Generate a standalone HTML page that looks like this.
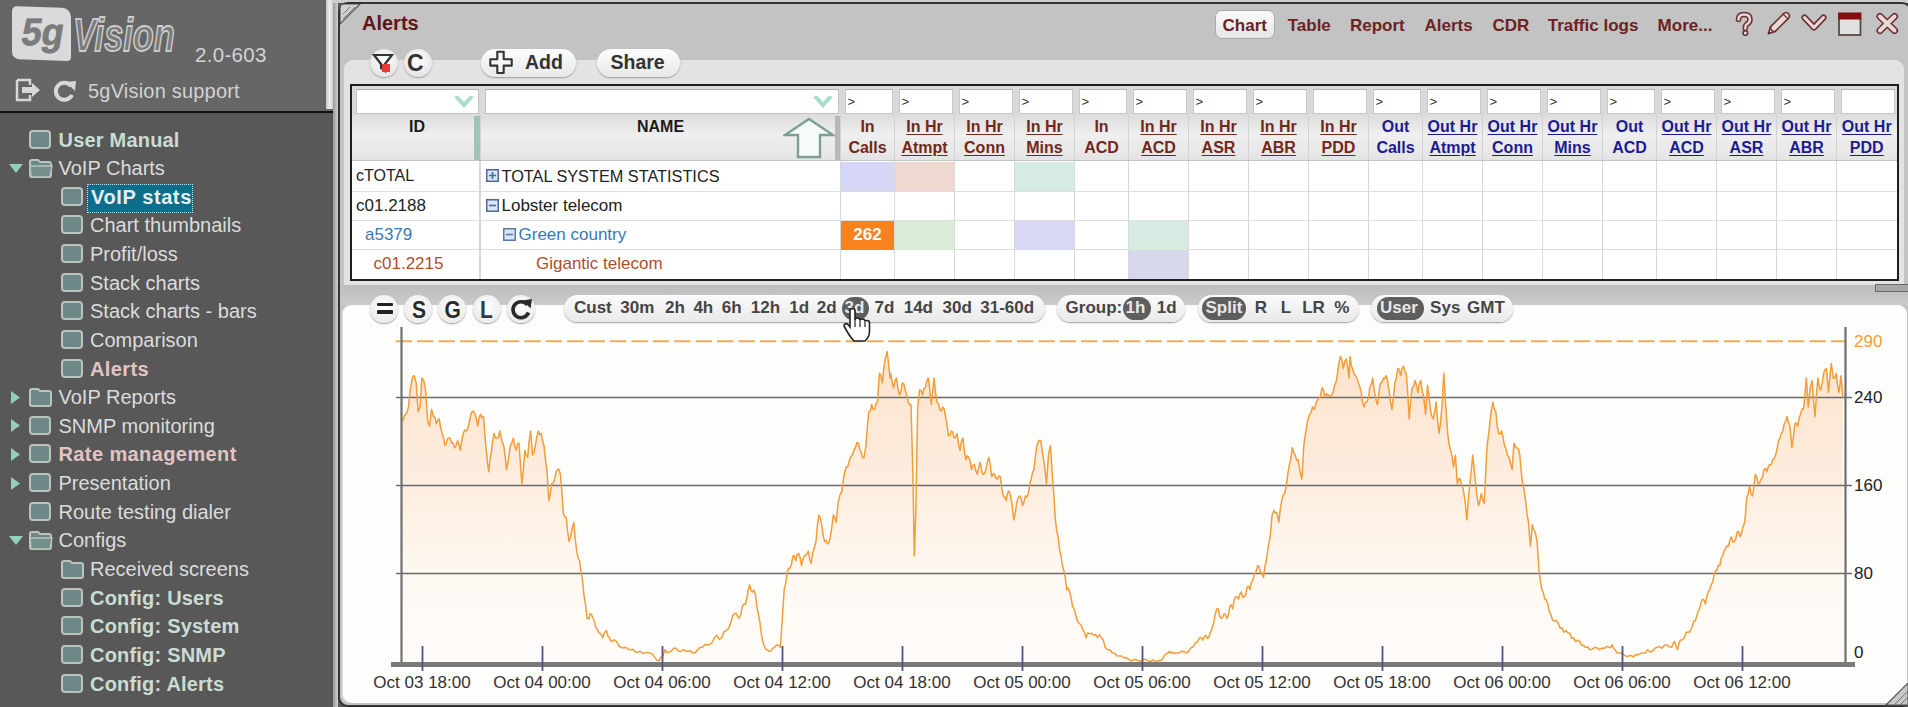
<!DOCTYPE html><html><head><meta charset="utf-8"><style>
*{box-sizing:border-box}
html,body{margin:0;padding:0;width:1908px;height:707px;overflow:hidden;background:#585858;font-family:"Liberation Sans", sans-serif}
.a{position:absolute}
.t{position:absolute;white-space:nowrap;line-height:1}
</style></head><body>
<div class="a" style="left:0;top:0;width:333px;height:111px;background:#666"></div>
<div class="a" style="left:0;top:111px;width:333px;height:2px;background:#111"></div>
<div class="a" style="left:326px;top:0;width:7px;height:109px;background:linear-gradient(90deg,#c8c8c8,#ececec,#d0d0d0)"></div>
<div class="a" style="left:333px;top:0;width:5px;height:707px;background:linear-gradient(90deg,#9a9a9a,#cfcfcf)"></div>
<div class="a" style="left:12px;top:7px;width:59px;height:53px;background:#dadada;border-radius:5px 9px 4px 7px;transform:skewY(2deg)"></div>
<div class="t" style="left:19px;top:13px;font-size:38px;font-weight:700;color:#7b7b7b;-webkit-text-stroke:0.8px #7b7b7b;transform:skewX(-9deg) scaleX(0.95);transform-origin:0 100%">5g</div>
<div class="t" style="left:73px;top:11px;font-size:47px;font-weight:700;font-style:italic;color:#7a7a7a;-webkit-text-stroke:1.8px #cdcdcd;transform:scaleX(0.73);transform-origin:0 0">Vision</div>
<div class="t" style="left:195px;top:45px;font-size:20.5px;letter-spacing:0.3px;color:#d2d2d2">2.0-603</div>
<svg class="a" style="left:14px;top:77px" width="30" height="26" viewBox="0 0 30 26"><path d="M3 3 H16 V8 M3 3 V23 H16 V18" fill="none" stroke="#d8d8d8" stroke-width="2.5"/><path d="M8 10 H18 V6 L26 13 L18 20 V16 H8 Z" fill="#d8d8d8"/></svg>
<svg class="a" style="left:52px;top:79px" width="26" height="24" viewBox="0 0 26 24"><path d="M19 7 A8.5 8.5 0 1 0 20 16" fill="none" stroke="#d8d8d8" stroke-width="4"/><path d="M14 3 L24 2 L23 12 Z" fill="#d8d8d8"/></svg>
<div class="t" style="left:88px;top:81px;font-size:20px;letter-spacing:0.2px;color:#d2d2d2">5gVision support</div>
<div class="a" style="left:29.0px;top:129.5px;width:22px;height:19px;background:#6d8886;border:2px solid #b9c4bd;border-radius:4px"></div>
<div class="t" style="left:58.5px;top:129.5px;font-size:20px;font-weight:700;color:#c9ddd4;letter-spacing:0.2px">User Manual</div>
<svg class="a" style="left:28.0px;top:156.6px" width="26" height="22" viewBox="0 0 26 22"><path d="M2 5 Q2 3 4 3 H10 L12 5 H21 Q23 5 23 7 V18 Q23 20 21 20 H4 Q2 20 2 18 Z" fill="#6d8886" stroke="#b9c4bd" stroke-width="2"/><path d="M2 9 H24 L22 20 H3 Z" fill="#758f8d" stroke="#b9c4bd" stroke-width="1.5"/></svg>
<svg class="a" style="left:8px;top:162.6px" width="16" height="11" viewBox="0 0 16 11"><path d="M1 1 H15 L8 10 Z" fill="#8fd1ba"/></svg>
<div class="t" style="left:58.5px;top:158.1px;font-size:20px;color:#dcdcdc">VoIP Charts</div>
<div class="a" style="left:60.5px;top:186.8px;width:22px;height:19px;background:#6d8886;border:2px solid #b9c4bd;border-radius:4px"></div>
<div class="a" style="left:87px;top:183.8px;width:106px;height:29px;background:#0d6e8b;border:1.5px dotted #bfe6ee"></div>
<div class="t" style="left:91.0px;top:186.8px;font-size:20px;font-weight:700;letter-spacing:0.6px;color:#e6eef0">VoIP stats</div>
<div class="a" style="left:60.5px;top:215.4px;width:22px;height:19px;background:#6d8886;border:2px solid #b9c4bd;border-radius:4px"></div>
<div class="t" style="left:90.0px;top:215.4px;font-size:20px;color:#dcdcdc">Chart thumbnails</div>
<div class="a" style="left:60.5px;top:244.0px;width:22px;height:19px;background:#6d8886;border:2px solid #b9c4bd;border-radius:4px"></div>
<div class="t" style="left:90.0px;top:244.0px;font-size:20px;color:#dcdcdc">Profit/loss</div>
<div class="a" style="left:60.5px;top:272.6px;width:22px;height:19px;background:#6d8886;border:2px solid #b9c4bd;border-radius:4px"></div>
<div class="t" style="left:90.0px;top:272.6px;font-size:20px;color:#dcdcdc">Stack charts</div>
<div class="a" style="left:60.5px;top:301.3px;width:22px;height:19px;background:#6d8886;border:2px solid #b9c4bd;border-radius:4px"></div>
<div class="t" style="left:90.0px;top:301.3px;font-size:20px;color:#dcdcdc">Stack charts - bars</div>
<div class="a" style="left:60.5px;top:329.9px;width:22px;height:19px;background:#6d8886;border:2px solid #b9c4bd;border-radius:4px"></div>
<div class="t" style="left:90.0px;top:329.9px;font-size:20px;color:#dcdcdc">Comparison</div>
<div class="a" style="left:60.5px;top:358.5px;width:22px;height:19px;background:#6d8886;border:2px solid #b9c4bd;border-radius:4px"></div>
<div class="t" style="left:90.0px;top:358.5px;font-size:20px;font-weight:700;color:#e3c4c4;letter-spacing:0.4px">Alerts</div>
<svg class="a" style="left:28.0px;top:385.7px" width="26" height="22" viewBox="0 0 26 22"><path d="M2 5 Q2 3 4 3 H10 L12 5 H21 Q23 5 23 7 V18 Q23 20 21 20 H4 Q2 20 2 18 Z" fill="#6d8886" stroke="#b9c4bd" stroke-width="2"/></svg>
<svg class="a" style="left:10px;top:389.7px" width="11" height="15" viewBox="0 0 11 15"><path d="M1 1 V14 L10 7.5 Z" fill="#8fd1ba"/></svg>
<div class="t" style="left:58.5px;top:387.2px;font-size:20px;color:#dcdcdc">VoIP Reports</div>
<div class="a" style="left:29.0px;top:415.8px;width:22px;height:19px;background:#6d8886;border:2px solid #b9c4bd;border-radius:4px"></div>
<svg class="a" style="left:10px;top:418.3px" width="11" height="15" viewBox="0 0 11 15"><path d="M1 1 V14 L10 7.5 Z" fill="#8fd1ba"/></svg>
<div class="t" style="left:58.5px;top:415.8px;font-size:20px;color:#dcdcdc">SNMP monitoring</div>
<div class="a" style="left:29.0px;top:444.4px;width:22px;height:19px;background:#6d8886;border:2px solid #b9c4bd;border-radius:4px"></div>
<svg class="a" style="left:10px;top:446.9px" width="11" height="15" viewBox="0 0 11 15"><path d="M1 1 V14 L10 7.5 Z" fill="#8fd1ba"/></svg>
<div class="t" style="left:58.5px;top:444.4px;font-size:20px;font-weight:700;color:#e3c4c4;letter-spacing:0.4px">Rate management</div>
<div class="a" style="left:29.0px;top:473.1px;width:22px;height:19px;background:#6d8886;border:2px solid #b9c4bd;border-radius:4px"></div>
<svg class="a" style="left:10px;top:475.6px" width="11" height="15" viewBox="0 0 11 15"><path d="M1 1 V14 L10 7.5 Z" fill="#8fd1ba"/></svg>
<div class="t" style="left:58.5px;top:473.1px;font-size:20px;color:#dcdcdc">Presentation</div>
<div class="a" style="left:29.0px;top:501.7px;width:22px;height:19px;background:#6d8886;border:2px solid #b9c4bd;border-radius:4px"></div>
<div class="t" style="left:58.5px;top:501.7px;font-size:20px;color:#dcdcdc">Route testing dialer</div>
<svg class="a" style="left:28.0px;top:528.8px" width="26" height="22" viewBox="0 0 26 22"><path d="M2 5 Q2 3 4 3 H10 L12 5 H21 Q23 5 23 7 V18 Q23 20 21 20 H4 Q2 20 2 18 Z" fill="#6d8886" stroke="#b9c4bd" stroke-width="2"/><path d="M2 9 H24 L22 20 H3 Z" fill="#758f8d" stroke="#b9c4bd" stroke-width="1.5"/></svg>
<svg class="a" style="left:8px;top:534.8px" width="16" height="11" viewBox="0 0 16 11"><path d="M1 1 H15 L8 10 Z" fill="#8fd1ba"/></svg>
<div class="t" style="left:58.5px;top:530.3px;font-size:20px;color:#dcdcdc">Configs</div>
<svg class="a" style="left:59.5px;top:557.5px" width="26" height="22" viewBox="0 0 26 22"><path d="M2 5 Q2 3 4 3 H10 L12 5 H21 Q23 5 23 7 V18 Q23 20 21 20 H4 Q2 20 2 18 Z" fill="#6d8886" stroke="#b9c4bd" stroke-width="2"/></svg>
<div class="t" style="left:90.0px;top:559.0px;font-size:20px;color:#dcdcdc">Received screens</div>
<div class="a" style="left:60.5px;top:587.6px;width:22px;height:19px;background:#6d8886;border:2px solid #b9c4bd;border-radius:4px"></div>
<div class="t" style="left:90.0px;top:587.6px;font-size:20px;font-weight:700;color:#c9ddd4;letter-spacing:0.2px">Config: Users</div>
<div class="a" style="left:60.5px;top:616.2px;width:22px;height:19px;background:#6d8886;border:2px solid #b9c4bd;border-radius:4px"></div>
<div class="t" style="left:90.0px;top:616.2px;font-size:20px;font-weight:700;color:#c9ddd4;letter-spacing:0.2px">Config: System</div>
<div class="a" style="left:60.5px;top:644.8px;width:22px;height:19px;background:#6d8886;border:2px solid #b9c4bd;border-radius:4px"></div>
<div class="t" style="left:90.0px;top:644.8px;font-size:20px;font-weight:700;color:#c9ddd4;letter-spacing:0.2px">Config: SNMP</div>
<div class="a" style="left:60.5px;top:673.5px;width:22px;height:19px;background:#6d8886;border:2px solid #b9c4bd;border-radius:4px"></div>
<div class="t" style="left:90.0px;top:673.5px;font-size:20px;font-weight:700;color:#c9ddd4;letter-spacing:0.2px">Config: Alerts</div>
<div class="a" style="left:333px;top:0;width:1575px;height:3px;background:#cdcdcd"></div>
<div class="a" style="left:338px;top:2px;width:1574px;height:705px;background:#c3c3c3;border:2px solid #333;border-radius:10px"></div>
<svg class="a" style="left:340px;top:4px" width="22" height="22" viewBox="0 0 22 22"><path d="M0 20 L20 0 H4 Q0 0 0 4 Z" fill="#d0d0d0" stroke="#555" stroke-width="1.2"/><path d="M3 10 L10 3 M3 15 L15 3" stroke="#777" stroke-width="1"/></svg>
<div class="t" style="left:362px;top:12.5px;font-size:20px;font-weight:700;color:#5e1616">Alerts</div>
<div class="a" style="left:1215px;top:10px;width:60px;height:29px;background:linear-gradient(#fafafa,#e6e6e6);border:1.5px solid #a9a9a9;border-radius:7px"></div>
<div class="t" style="left:1222.6px;top:17px;font-size:17px;font-weight:700;color:#6e2222">Chart</div>
<div class="t" style="left:1287.7px;top:17px;font-size:17px;font-weight:700;color:#6e2222">Table</div>
<div class="t" style="left:1350px;top:17px;font-size:17px;font-weight:700;color:#6e2222">Report</div>
<div class="t" style="left:1424.5px;top:17px;font-size:17px;font-weight:700;color:#6e2222">Alerts</div>
<div class="t" style="left:1492.5px;top:17px;font-size:17px;font-weight:700;color:#6e2222">CDR</div>
<div class="t" style="left:1547.7px;top:17px;font-size:17px;font-weight:700;color:#6e2222">Traffic logs</div>
<div class="t" style="left:1657.6px;top:17px;font-size:17px;font-weight:700;color:#6e2222">More...</div>
<svg class="a" style="left:1725px;top:5px" width="183" height="40" viewBox="1725 5 183 40"><path d="M1738.5 19.5 Q1738.5 14.5 1744 14.5 Q1750 14.5 1750 19.5 Q1750 22.5 1746.5 24.5 Q1745.3 25.5 1745.3 28.5" fill="none" stroke="#6a3434" stroke-width="5.6" stroke-linecap="round" stroke-linejoin="round"/><path d="M1738.5 19.5 Q1738.5 14.5 1744 14.5 Q1750 14.5 1750 19.5 Q1750 22.5 1746.5 24.5 Q1745.3 25.5 1745.3 28.5" fill="none" stroke="#ead8d8" stroke-width="2.3999999999999995" stroke-linecap="round" stroke-linejoin="round"/><circle cx="1745.3" cy="33" r="2.3" fill="#ead8d8" stroke="#6a3434" stroke-width="1.6"/><path d="M1768.5 33.5 L1770.5 26.5 L1775.5 31.5 Z" fill="#ead8d8" stroke="#6a3434" stroke-width="1.6" stroke-linejoin="round"/><path d="M1774 28 L1786 16" fill="none" stroke="#6a3434" stroke-width="8.2" stroke-linecap="round" stroke-linejoin="round"/><path d="M1774 28 L1786 16" fill="none" stroke="#ead8d8" stroke-width="4.999999999999999" stroke-linecap="round" stroke-linejoin="round"/><path d="M1767.5 34.5 L1768.5 31 L1771 33.5 Z" fill="#5a2424"/><path d="M1782.5 13.5 L1788.5 19.5" stroke="#6a3434" stroke-width="1.2"/><path d="M1804.5 17.5 L1814 27.5 L1823.5 17.5" fill="none" stroke="#6a3434" stroke-width="6.2" stroke-linecap="round" stroke-linejoin="round"/><path d="M1804.5 17.5 L1814 27.5 L1823.5 17.5" fill="none" stroke="#ead8d8" stroke-width="3.0" stroke-linecap="round" stroke-linejoin="round"/><rect x="1839" y="13.5" width="21.5" height="21.5" fill="#dfe2df" stroke="#5a4a4a" stroke-width="1.8"/><rect x="1838.2" y="12.7" width="23" height="6.8" fill="#880c0c"/><path d="M1880 16.5 L1894.5 30.5 M1894.5 16.5 L1880 30.5" fill="none" stroke="#6a3434" stroke-width="7.2" stroke-linecap="round" stroke-linejoin="round"/><path d="M1880 16.5 L1894.5 30.5 M1894.5 16.5 L1880 30.5" fill="none" stroke="#ead8d8" stroke-width="4.0" stroke-linecap="round" stroke-linejoin="round"/></svg>
<div class="a" style="left:344px;top:60px;width:1560px;height:225px;background:#e3e3e3;border-radius:9px 9px 0 0"></div>
<div class="a" style="left:369.5px;top:49.0px;width:28px;height:28px;border-radius:50%;background:radial-gradient(circle at 50% 40%,#ffffff,#e6e6e6 70%,#d2d2d2);box-shadow:0 1px 1.5px #9a9a9a"></div>
<div class="a" style="left:404.0px;top:49.0px;width:28px;height:28px;border-radius:50%;background:radial-gradient(circle at 50% 40%,#ffffff,#e6e6e6 70%,#d2d2d2);box-shadow:0 1px 1.5px #9a9a9a"></div>
<svg class="a" style="left:371px;top:51px" width="26" height="24" viewBox="0 0 26 24"><path d="M3 4 H21 L14 13 V20 L10 17 V13 Z" fill="none" stroke="#333" stroke-width="2.2"/><rect x="11" y="13" width="8" height="8" fill="#e83a3a"/></svg>
<div class="t" style="left:407px;top:52px;font-size:23px;font-weight:700;color:#333">C</div>
<div class="a" style="left:480.5px;top:48.5px;width:95px;height:28px;border-radius:14px;background:linear-gradient(#fdfdfd,#e8e8e8);box-shadow:0 1px 1.5px #999"></div>
<svg class="a" style="left:488px;top:50px" width="27" height="25" viewBox="0 0 27 25"><path d="M9.3 1.8 H15.7 V9.2 H23.7 V15.6 H15.7 V23 H9.3 V15.6 H2.3 V9.2 H9.3 Z" fill="#f6f6f6" stroke="#333" stroke-width="2.1" stroke-linejoin="round"/></svg>
<div class="t" style="left:525px;top:53px;font-size:19.5px;font-weight:700;color:#333">Add</div>
<div class="a" style="left:596.5px;top:48.5px;width:83.5px;height:28px;border-radius:14px;background:linear-gradient(#fdfdfd,#e8e8e8);box-shadow:0 1px 1.5px #999"></div>
<div class="t" style="left:610.5px;top:53px;font-size:19.5px;font-weight:700;color:#333">Share</div>
<div class="a" style="left:350px;top:84px;width:1549px;height:197px;background:#fff;border:2px solid #1e1e1e"></div>
<div class="a" style="left:352px;top:86px;width:1545px;height:28px;background:#d9d9d9"></div>
<div class="a" style="left:352px;top:114px;width:1545px;height:46px;background:linear-gradient(#dcdcdc,#efefef 45%,#e4e4e4)"></div>
<div class="a" style="left:352px;top:159.5px;width:1545px;height:1.5px;background:#c4c4c4"></div>
<div class="a" style="left:352px;top:190.5px;width:1545px;height:1.3px;background:#dedede"></div>
<div class="a" style="left:352px;top:219.5px;width:1545px;height:1.3px;background:#dedede"></div>
<div class="a" style="left:352px;top:249.0px;width:1545px;height:1.3px;background:#dedede"></div>
<div class="a" style="left:841.1px;top:161.5px;width:53.6px;height:29.5px;background:#d6d6f6"></div>
<div class="a" style="left:895.1px;top:161.5px;width:59.6px;height:29.5px;background:#eed8d0"></div>
<div class="a" style="left:1015.1px;top:161.5px;width:59.6px;height:29.5px;background:#d6ece2"></div>
<div class="a" style="left:841.1px;top:220.5px;width:53.6px;height:29.0px;background:#f7821e"></div>
<div class="a" style="left:895.1px;top:220.5px;width:59.6px;height:29.0px;background:#d8ecd8"></div>
<div class="a" style="left:1015.1px;top:220.5px;width:59.6px;height:29.0px;background:#d8d8f6"></div>
<div class="a" style="left:1129.1px;top:220.5px;width:59.6px;height:29.0px;background:#d6ece2"></div>
<div class="a" style="left:1129.1px;top:250.0px;width:59.6px;height:29.0px;background:#d8d8ec"></div>
<div class="a" style="left:479.4px;top:161px;width:1.3px;height:118px;background:#d8d8d8"></div>
<div class="a" style="left:479.4px;top:114px;width:1.3px;height:46px;background:#d2d2d2"></div>
<div class="a" style="left:839.9px;top:161px;width:1.3px;height:118px;background:#d8d8d8"></div>
<div class="a" style="left:839.9px;top:114px;width:1.3px;height:46px;background:#d2d2d2"></div>
<div class="a" style="left:893.9px;top:161px;width:1.3px;height:118px;background:#d8d8d8"></div>
<div class="a" style="left:893.9px;top:114px;width:1.3px;height:46px;background:#d2d2d2"></div>
<div class="a" style="left:953.9px;top:161px;width:1.3px;height:118px;background:#d8d8d8"></div>
<div class="a" style="left:953.9px;top:114px;width:1.3px;height:46px;background:#d2d2d2"></div>
<div class="a" style="left:1013.9px;top:161px;width:1.3px;height:118px;background:#d8d8d8"></div>
<div class="a" style="left:1013.9px;top:114px;width:1.3px;height:46px;background:#d2d2d2"></div>
<div class="a" style="left:1073.9px;top:161px;width:1.3px;height:118px;background:#d8d8d8"></div>
<div class="a" style="left:1073.9px;top:114px;width:1.3px;height:46px;background:#d2d2d2"></div>
<div class="a" style="left:1127.9px;top:161px;width:1.3px;height:118px;background:#d8d8d8"></div>
<div class="a" style="left:1127.9px;top:114px;width:1.3px;height:46px;background:#d2d2d2"></div>
<div class="a" style="left:1187.9px;top:161px;width:1.3px;height:118px;background:#d8d8d8"></div>
<div class="a" style="left:1187.9px;top:114px;width:1.3px;height:46px;background:#d2d2d2"></div>
<div class="a" style="left:1247.9px;top:161px;width:1.3px;height:118px;background:#d8d8d8"></div>
<div class="a" style="left:1247.9px;top:114px;width:1.3px;height:46px;background:#d2d2d2"></div>
<div class="a" style="left:1307.9px;top:161px;width:1.3px;height:118px;background:#d8d8d8"></div>
<div class="a" style="left:1307.9px;top:114px;width:1.3px;height:46px;background:#d2d2d2"></div>
<div class="a" style="left:1367.9px;top:161px;width:1.3px;height:118px;background:#d8d8d8"></div>
<div class="a" style="left:1367.9px;top:114px;width:1.3px;height:46px;background:#d2d2d2"></div>
<div class="a" style="left:1421.9px;top:161px;width:1.3px;height:118px;background:#d8d8d8"></div>
<div class="a" style="left:1421.9px;top:114px;width:1.3px;height:46px;background:#d2d2d2"></div>
<div class="a" style="left:1481.9px;top:161px;width:1.3px;height:118px;background:#d8d8d8"></div>
<div class="a" style="left:1481.9px;top:114px;width:1.3px;height:46px;background:#d2d2d2"></div>
<div class="a" style="left:1541.9px;top:161px;width:1.3px;height:118px;background:#d8d8d8"></div>
<div class="a" style="left:1541.9px;top:114px;width:1.3px;height:46px;background:#d2d2d2"></div>
<div class="a" style="left:1601.9px;top:161px;width:1.3px;height:118px;background:#d8d8d8"></div>
<div class="a" style="left:1601.9px;top:114px;width:1.3px;height:46px;background:#d2d2d2"></div>
<div class="a" style="left:1655.9px;top:161px;width:1.3px;height:118px;background:#d8d8d8"></div>
<div class="a" style="left:1655.9px;top:114px;width:1.3px;height:46px;background:#d2d2d2"></div>
<div class="a" style="left:1715.9px;top:161px;width:1.3px;height:118px;background:#d8d8d8"></div>
<div class="a" style="left:1715.9px;top:114px;width:1.3px;height:46px;background:#d2d2d2"></div>
<div class="a" style="left:1775.9px;top:161px;width:1.3px;height:118px;background:#d8d8d8"></div>
<div class="a" style="left:1775.9px;top:114px;width:1.3px;height:46px;background:#d2d2d2"></div>
<div class="a" style="left:1835.9px;top:161px;width:1.3px;height:118px;background:#d8d8d8"></div>
<div class="a" style="left:1835.9px;top:114px;width:1.3px;height:46px;background:#d2d2d2"></div>
<div class="a" style="left:356px;top:88.5px;width:123px;height:25.5px;background:#fff;border:1px solid #c4c4c4;border-top-color:#b0b0b0"></div>
<div class="a" style="left:484.5px;top:88.5px;width:354px;height:25.5px;background:#fff;border:1px solid #c4c4c4;border-top-color:#b0b0b0"></div>
<svg class="a" style="left:453px;top:95px" width="22" height="14" viewBox="0 0 22 14"><path d="M1 2 L5 0.5 L11 7 L17 0.5 L21 2 L11 13 Z" fill="#a9dccb"/></svg>
<svg class="a" style="left:812px;top:95px" width="22" height="14" viewBox="0 0 22 14"><path d="M1 2 L5 0.5 L11 7 L17 0.5 L21 2 L11 13 Z" fill="#a9dccb"/></svg>
<div class="a" style="left:844.5px;top:88.5px;width:48.0px;height:25.5px;background:#fff;border:1px solid #c8c8c8;border-top-color:#b4b4b4"></div>
<div class="t" style="left:847.5px;top:94.5px;font-size:13px;color:#333">&gt;</div>
<div class="a" style="left:898.5px;top:88.5px;width:54.0px;height:25.5px;background:#fff;border:1px solid #c8c8c8;border-top-color:#b4b4b4"></div>
<div class="t" style="left:901.5px;top:94.5px;font-size:13px;color:#333">&gt;</div>
<div class="a" style="left:958.5px;top:88.5px;width:54.0px;height:25.5px;background:#fff;border:1px solid #c8c8c8;border-top-color:#b4b4b4"></div>
<div class="t" style="left:961.5px;top:94.5px;font-size:13px;color:#333">&gt;</div>
<div class="a" style="left:1018.5px;top:88.5px;width:54.0px;height:25.5px;background:#fff;border:1px solid #c8c8c8;border-top-color:#b4b4b4"></div>
<div class="t" style="left:1021.5px;top:94.5px;font-size:13px;color:#333">&gt;</div>
<div class="a" style="left:1078.5px;top:88.5px;width:48.0px;height:25.5px;background:#fff;border:1px solid #c8c8c8;border-top-color:#b4b4b4"></div>
<div class="t" style="left:1081.5px;top:94.5px;font-size:13px;color:#333">&gt;</div>
<div class="a" style="left:1132.5px;top:88.5px;width:54.0px;height:25.5px;background:#fff;border:1px solid #c8c8c8;border-top-color:#b4b4b4"></div>
<div class="t" style="left:1135.5px;top:94.5px;font-size:13px;color:#333">&gt;</div>
<div class="a" style="left:1192.5px;top:88.5px;width:54.0px;height:25.5px;background:#fff;border:1px solid #c8c8c8;border-top-color:#b4b4b4"></div>
<div class="t" style="left:1195.5px;top:94.5px;font-size:13px;color:#333">&gt;</div>
<div class="a" style="left:1252.5px;top:88.5px;width:54.0px;height:25.5px;background:#fff;border:1px solid #c8c8c8;border-top-color:#b4b4b4"></div>
<div class="t" style="left:1255.5px;top:94.5px;font-size:13px;color:#333">&gt;</div>
<div class="a" style="left:1312.5px;top:88.5px;width:54.0px;height:25.5px;background:#fff;border:1px solid #c8c8c8;border-top-color:#b4b4b4"></div>
<div class="a" style="left:1372.5px;top:88.5px;width:48.0px;height:25.5px;background:#fff;border:1px solid #c8c8c8;border-top-color:#b4b4b4"></div>
<div class="t" style="left:1375.5px;top:94.5px;font-size:13px;color:#333">&gt;</div>
<div class="a" style="left:1426.5px;top:88.5px;width:54.0px;height:25.5px;background:#fff;border:1px solid #c8c8c8;border-top-color:#b4b4b4"></div>
<div class="t" style="left:1429.5px;top:94.5px;font-size:13px;color:#333">&gt;</div>
<div class="a" style="left:1486.5px;top:88.5px;width:54.0px;height:25.5px;background:#fff;border:1px solid #c8c8c8;border-top-color:#b4b4b4"></div>
<div class="t" style="left:1489.5px;top:94.5px;font-size:13px;color:#333">&gt;</div>
<div class="a" style="left:1546.5px;top:88.5px;width:54.0px;height:25.5px;background:#fff;border:1px solid #c8c8c8;border-top-color:#b4b4b4"></div>
<div class="t" style="left:1549.5px;top:94.5px;font-size:13px;color:#333">&gt;</div>
<div class="a" style="left:1606.5px;top:88.5px;width:48.0px;height:25.5px;background:#fff;border:1px solid #c8c8c8;border-top-color:#b4b4b4"></div>
<div class="t" style="left:1609.5px;top:94.5px;font-size:13px;color:#333">&gt;</div>
<div class="a" style="left:1660.5px;top:88.5px;width:54.0px;height:25.5px;background:#fff;border:1px solid #c8c8c8;border-top-color:#b4b4b4"></div>
<div class="t" style="left:1663.5px;top:94.5px;font-size:13px;color:#333">&gt;</div>
<div class="a" style="left:1720.5px;top:88.5px;width:54.0px;height:25.5px;background:#fff;border:1px solid #c8c8c8;border-top-color:#b4b4b4"></div>
<div class="t" style="left:1723.5px;top:94.5px;font-size:13px;color:#333">&gt;</div>
<div class="a" style="left:1780.5px;top:88.5px;width:54.0px;height:25.5px;background:#fff;border:1px solid #c8c8c8;border-top-color:#b4b4b4"></div>
<div class="t" style="left:1783.5px;top:94.5px;font-size:13px;color:#333">&gt;</div>
<div class="a" style="left:1840.5px;top:88.5px;width:54.5px;height:25.5px;background:#fff;border:1px solid #c8c8c8;border-top-color:#b4b4b4"></div>
<div class="a" style="left:474px;top:116px;width:6px;height:44px;background:#9ec4bb"></div>
<div class="a" style="left:835px;top:116px;width:5px;height:44px;background:#b8b8b8"></div>
<div class="t" style="left:409px;top:119px;font-size:16px;font-weight:700;color:#1a1a1a">ID</div>
<div class="t" style="left:637px;top:119px;font-size:16px;font-weight:700;color:#1a1a1a">NAME</div>
<svg class="a" style="left:783px;top:117px" width="52" height="42" viewBox="0 0 52 42"><path d="M2 18 L26 2 L50 18 H37 V40 H15 V18 Z" fill="#f4fbf8" stroke="#7f9e98" stroke-width="2.4" stroke-linejoin="miter"/></svg>
<div class="t" style="left:840.5px;width:54.0px;top:119px;text-align:center;font-size:16px;font-weight:700;color:#72281a;text-decoration:none;text-underline-offset:1.5px">In</div>
<div class="t" style="left:840.5px;width:54.0px;top:140px;text-align:center;font-size:16px;font-weight:700;color:#72281a;text-decoration:none;text-underline-offset:1.5px">Calls</div>
<div class="t" style="left:894.5px;width:60.0px;top:119px;text-align:center;font-size:16px;font-weight:700;color:#72281a;text-decoration:underline;text-underline-offset:1.5px">In Hr</div>
<div class="t" style="left:894.5px;width:60.0px;top:140px;text-align:center;font-size:16px;font-weight:700;color:#72281a;text-decoration:underline;text-underline-offset:1.5px">Atmpt</div>
<div class="t" style="left:954.5px;width:60.0px;top:119px;text-align:center;font-size:16px;font-weight:700;color:#72281a;text-decoration:underline;text-underline-offset:1.5px">In Hr</div>
<div class="t" style="left:954.5px;width:60.0px;top:140px;text-align:center;font-size:16px;font-weight:700;color:#72281a;text-decoration:underline;text-underline-offset:1.5px">Conn</div>
<div class="t" style="left:1014.5px;width:60.0px;top:119px;text-align:center;font-size:16px;font-weight:700;color:#72281a;text-decoration:underline;text-underline-offset:1.5px">In Hr</div>
<div class="t" style="left:1014.5px;width:60.0px;top:140px;text-align:center;font-size:16px;font-weight:700;color:#72281a;text-decoration:underline;text-underline-offset:1.5px">Mins</div>
<div class="t" style="left:1074.5px;width:54.0px;top:119px;text-align:center;font-size:16px;font-weight:700;color:#72281a;text-decoration:none;text-underline-offset:1.5px">In</div>
<div class="t" style="left:1074.5px;width:54.0px;top:140px;text-align:center;font-size:16px;font-weight:700;color:#72281a;text-decoration:none;text-underline-offset:1.5px">ACD</div>
<div class="t" style="left:1128.5px;width:60.0px;top:119px;text-align:center;font-size:16px;font-weight:700;color:#72281a;text-decoration:underline;text-underline-offset:1.5px">In Hr</div>
<div class="t" style="left:1128.5px;width:60.0px;top:140px;text-align:center;font-size:16px;font-weight:700;color:#72281a;text-decoration:underline;text-underline-offset:1.5px">ACD</div>
<div class="t" style="left:1188.5px;width:60.0px;top:119px;text-align:center;font-size:16px;font-weight:700;color:#72281a;text-decoration:underline;text-underline-offset:1.5px">In Hr</div>
<div class="t" style="left:1188.5px;width:60.0px;top:140px;text-align:center;font-size:16px;font-weight:700;color:#72281a;text-decoration:underline;text-underline-offset:1.5px">ASR</div>
<div class="t" style="left:1248.5px;width:60.0px;top:119px;text-align:center;font-size:16px;font-weight:700;color:#72281a;text-decoration:underline;text-underline-offset:1.5px">In Hr</div>
<div class="t" style="left:1248.5px;width:60.0px;top:140px;text-align:center;font-size:16px;font-weight:700;color:#72281a;text-decoration:underline;text-underline-offset:1.5px">ABR</div>
<div class="t" style="left:1308.5px;width:60.0px;top:119px;text-align:center;font-size:16px;font-weight:700;color:#72281a;text-decoration:underline;text-underline-offset:1.5px">In Hr</div>
<div class="t" style="left:1308.5px;width:60.0px;top:140px;text-align:center;font-size:16px;font-weight:700;color:#72281a;text-decoration:underline;text-underline-offset:1.5px">PDD</div>
<div class="t" style="left:1368.5px;width:54.0px;top:119px;text-align:center;font-size:16px;font-weight:700;color:#1c1c92;text-decoration:none;text-underline-offset:1.5px">Out</div>
<div class="t" style="left:1368.5px;width:54.0px;top:140px;text-align:center;font-size:16px;font-weight:700;color:#1c1c92;text-decoration:none;text-underline-offset:1.5px">Calls</div>
<div class="t" style="left:1422.5px;width:60.0px;top:119px;text-align:center;font-size:16px;font-weight:700;color:#1c1c92;text-decoration:underline;text-underline-offset:1.5px">Out Hr</div>
<div class="t" style="left:1422.5px;width:60.0px;top:140px;text-align:center;font-size:16px;font-weight:700;color:#1c1c92;text-decoration:underline;text-underline-offset:1.5px">Atmpt</div>
<div class="t" style="left:1482.5px;width:60.0px;top:119px;text-align:center;font-size:16px;font-weight:700;color:#1c1c92;text-decoration:underline;text-underline-offset:1.5px">Out Hr</div>
<div class="t" style="left:1482.5px;width:60.0px;top:140px;text-align:center;font-size:16px;font-weight:700;color:#1c1c92;text-decoration:underline;text-underline-offset:1.5px">Conn</div>
<div class="t" style="left:1542.5px;width:60.0px;top:119px;text-align:center;font-size:16px;font-weight:700;color:#1c1c92;text-decoration:underline;text-underline-offset:1.5px">Out Hr</div>
<div class="t" style="left:1542.5px;width:60.0px;top:140px;text-align:center;font-size:16px;font-weight:700;color:#1c1c92;text-decoration:underline;text-underline-offset:1.5px">Mins</div>
<div class="t" style="left:1602.5px;width:54.0px;top:119px;text-align:center;font-size:16px;font-weight:700;color:#1c1c92;text-decoration:none;text-underline-offset:1.5px">Out</div>
<div class="t" style="left:1602.5px;width:54.0px;top:140px;text-align:center;font-size:16px;font-weight:700;color:#1c1c92;text-decoration:none;text-underline-offset:1.5px">ACD</div>
<div class="t" style="left:1656.5px;width:60.0px;top:119px;text-align:center;font-size:16px;font-weight:700;color:#1c1c92;text-decoration:underline;text-underline-offset:1.5px">Out Hr</div>
<div class="t" style="left:1656.5px;width:60.0px;top:140px;text-align:center;font-size:16px;font-weight:700;color:#1c1c92;text-decoration:underline;text-underline-offset:1.5px">ACD</div>
<div class="t" style="left:1716.5px;width:60.0px;top:119px;text-align:center;font-size:16px;font-weight:700;color:#1c1c92;text-decoration:underline;text-underline-offset:1.5px">Out Hr</div>
<div class="t" style="left:1716.5px;width:60.0px;top:140px;text-align:center;font-size:16px;font-weight:700;color:#1c1c92;text-decoration:underline;text-underline-offset:1.5px">ASR</div>
<div class="t" style="left:1776.5px;width:60.0px;top:119px;text-align:center;font-size:16px;font-weight:700;color:#1c1c92;text-decoration:underline;text-underline-offset:1.5px">Out Hr</div>
<div class="t" style="left:1776.5px;width:60.0px;top:140px;text-align:center;font-size:16px;font-weight:700;color:#1c1c92;text-decoration:underline;text-underline-offset:1.5px">ABR</div>
<div class="t" style="left:1836.5px;width:60.5px;top:119px;text-align:center;font-size:16px;font-weight:700;color:#1c1c92;text-decoration:underline;text-underline-offset:1.5px">Out Hr</div>
<div class="t" style="left:1836.5px;width:60.5px;top:140px;text-align:center;font-size:16px;font-weight:700;color:#1c1c92;text-decoration:underline;text-underline-offset:1.5px">PDD</div>
<div class="t" style="left:356px;top:167.5px;font-size:16px;color:#222">cTOTAL</div>
<div class="t" style="left:356px;top:197px;font-size:17px;color:#222">c01.2188</div>
<div class="t" style="left:365px;top:226px;font-size:17px;color:#3a78b4">a5379</div>
<div class="t" style="left:373.5px;top:255px;font-size:17px;color:#b04e2c">c01.2215</div>
<svg class="a" style="left:485.5px;top:169px" width="13" height="13" viewBox="0 0 13 13"><rect x="0.75" y="0.75" width="11.5" height="11.5" fill="#dbe4f4" stroke="#4a6a9a" stroke-width="1.5"/><path d="M3 6.5 H10 M6.5 3 V10" stroke="#4a6a9a" stroke-width="1.6"/></svg>
<div class="t" style="left:501.5px;top:168px;font-size:16.3px;color:#222">TOTAL SYSTEM STATISTICS</div>
<svg class="a" style="left:485.5px;top:198.5px" width="13" height="13" viewBox="0 0 13 13"><rect x="0.75" y="0.75" width="11.5" height="11.5" fill="#dbe4f4" stroke="#4a6a9a" stroke-width="1.5"/><path d="M3 6.5 H10" stroke="#4a6a9a" stroke-width="1.6"/></svg>
<div class="t" style="left:501.5px;top:197px;font-size:17px;color:#222">Lobster telecom</div>
<svg class="a" style="left:502.5px;top:227.5px" width="13" height="13" viewBox="0 0 13 13"><rect x="0.75" y="0.75" width="11.5" height="11.5" fill="#dbe4f4" stroke="#5a7aa4" stroke-width="1.5"/><path d="M3 6.5 H10" stroke="#5a7aa4" stroke-width="1.6"/></svg>
<div class="t" style="left:518.5px;top:226px;font-size:17px;color:#3a78b4">Green country</div>
<div class="t" style="left:536px;top:255px;font-size:17px;color:#b04e2c">Gigantic telecom</div>
<div class="t" style="left:840.5px;width:54px;top:226px;text-align:center;font-size:17px;font-weight:700;color:#fff">262</div>
<div class="a" style="left:340px;top:285px;width:1568px;height:20px;background:linear-gradient(#bdbdbd,#cbcbcb)"></div>
<div class="a" style="left:342px;top:305px;width:1565px;height:398px;background:#fdfdfc;border-radius:9px;box-shadow:inset 1px 0 0 #e0e0e0"></div>
<div class="a" style="left:1875px;top:284px;width:40px;height:8px;background:#a8a8a8;border:1.5px solid #6a6a6a;border-right:none"></div>
<div class="a" style="left:369.5px;top:294.5px;width:28px;height:28px;border-radius:50%;background:radial-gradient(circle at 50% 40%,#ffffff,#ececec 70%,#d6d6d6);box-shadow:0 1px 1.5px #9a9a9a"></div>
<div class="a" style="left:403.8px;top:294.5px;width:28px;height:28px;border-radius:50%;background:radial-gradient(circle at 50% 40%,#ffffff,#ececec 70%,#d6d6d6);box-shadow:0 1px 1.5px #9a9a9a"></div>
<div class="a" style="left:437.8px;top:294.5px;width:28px;height:28px;border-radius:50%;background:radial-gradient(circle at 50% 40%,#ffffff,#ececec 70%,#d6d6d6);box-shadow:0 1px 1.5px #9a9a9a"></div>
<div class="a" style="left:472.5px;top:294.5px;width:28px;height:28px;border-radius:50%;background:radial-gradient(circle at 50% 40%,#ffffff,#ececec 70%,#d6d6d6);box-shadow:0 1px 1.5px #9a9a9a"></div>
<div class="a" style="left:506.5px;top:294.5px;width:28px;height:28px;border-radius:50%;background:radial-gradient(circle at 50% 40%,#ffffff,#ececec 70%,#d6d6d6);box-shadow:0 1px 1.5px #9a9a9a"></div>
<div class="a" style="left:376.5px;top:302.5px;width:16px;height:3.2px;background:#222;border-radius:1px"></div>
<div class="a" style="left:376.5px;top:310px;width:16px;height:3.8px;background:#222;border-radius:1px"></div>
<div class="t" style="left:412px;top:298px;font-size:21px;font-weight:700;color:#2a2a2a;transform:scaleY(1.1);transform-origin:0 0">S</div>
<div class="t" style="left:444.5px;top:298px;font-size:21px;font-weight:700;color:#2a2a2a;transform:scaleY(1.1);transform-origin:0 0">G</div>
<div class="t" style="left:480px;top:298px;font-size:21px;font-weight:700;color:#2a3a4a;transform:scaleY(1.1);transform-origin:0 0">L</div>
<svg class="a" style="left:508px;top:296px" width="26" height="26" viewBox="0 0 26 26"><path d="M19.5 9 A8 8 0 1 0 20.5 16.5" fill="none" stroke="#2a2a2a" stroke-width="3.6"/><path d="M15 4.5 L24 3 L22.5 12.5 Z" fill="#2a2a2a"/></svg>
<div class="a" style="left:564px;top:294.5px;width:481px;height:27px;border-radius:14px;background:linear-gradient(#fbfbfb,#e9e9e9);box-shadow:0 1px 1.5px #9c9c9c"></div>
<div class="a" style="left:1057px;top:294.5px;width:128px;height:27px;border-radius:14px;background:linear-gradient(#fbfbfb,#e9e9e9);box-shadow:0 1px 1.5px #9c9c9c"></div>
<div class="a" style="left:1197.5px;top:294.5px;width:161.0px;height:27px;border-radius:14px;background:linear-gradient(#fbfbfb,#e9e9e9);box-shadow:0 1px 1.5px #9c9c9c"></div>
<div class="a" style="left:1371px;top:294.5px;width:141.5px;height:27px;border-radius:14px;background:linear-gradient(#fbfbfb,#e9e9e9);box-shadow:0 1px 1.5px #9c9c9c"></div>
<div class="a" style="left:841.5px;top:296.5px;width:27.5px;height:23px;border-radius:12px;background:#5e5e5e"></div>
<div class="a" style="left:1122.5px;top:296.5px;width:28.5px;height:23px;border-radius:12px;background:#5e5e5e"></div>
<div class="a" style="left:1202px;top:296.5px;width:44px;height:23px;border-radius:12px;background:#5e5e5e"></div>
<div class="a" style="left:1376.5px;top:296.5px;width:47.0px;height:23px;border-radius:12px;background:#5e5e5e"></div>
<div class="t" style="left:574px;top:298.5px;font-size:17px;font-weight:700;color:#454545">Cust</div>
<div class="t" style="left:620.3px;top:298.5px;font-size:17px;font-weight:700;color:#454545">30m</div>
<div class="t" style="left:665px;top:298.5px;font-size:17px;font-weight:700;color:#454545">2h</div>
<div class="t" style="left:693.4px;top:298.5px;font-size:17px;font-weight:700;color:#454545">4h</div>
<div class="t" style="left:721.7px;top:298.5px;font-size:17px;font-weight:700;color:#454545">6h</div>
<div class="t" style="left:750.8px;top:298.5px;font-size:17px;font-weight:700;color:#454545">12h</div>
<div class="t" style="left:789.3px;top:298.5px;font-size:17px;font-weight:700;color:#454545">1d</div>
<div class="t" style="left:816.8px;top:298.5px;font-size:17px;font-weight:700;color:#454545">2d</div>
<div class="t" style="left:844.5px;top:298.5px;font-size:17px;font-weight:700;color:#e8e8e8">3d</div>
<div class="t" style="left:874.6px;top:298.5px;font-size:17px;font-weight:700;color:#454545">7d</div>
<div class="t" style="left:903.7px;top:298.5px;font-size:17px;font-weight:700;color:#454545">14d</div>
<div class="t" style="left:942.5px;top:298.5px;font-size:17px;font-weight:700;color:#454545">30d</div>
<div class="t" style="left:980.3px;top:298.5px;font-size:17px;font-weight:700;color:#454545">31-60d</div>
<div class="t" style="left:1065.6px;top:298.5px;font-size:17px;font-weight:700;color:#454545">Group:</div>
<div class="t" style="left:1125.5px;top:298.5px;font-size:17px;font-weight:700;color:#e8e8e8">1h</div>
<div class="t" style="left:1156.7px;top:298.5px;font-size:17px;font-weight:700;color:#454545">1d</div>
<div class="t" style="left:1205.5px;top:298.5px;font-size:17px;font-weight:700;color:#e8e8e8">Split</div>
<div class="t" style="left:1254.7px;top:298.5px;font-size:17px;font-weight:700;color:#454545">R</div>
<div class="t" style="left:1280.8px;top:298.5px;font-size:17px;font-weight:700;color:#454545">L</div>
<div class="t" style="left:1302.2px;top:298.5px;font-size:17px;font-weight:700;color:#454545">LR</div>
<div class="t" style="left:1334.2px;top:298.5px;font-size:17px;font-weight:700;color:#454545">%</div>
<div class="t" style="left:1380px;top:298.5px;font-size:17px;font-weight:700;color:#e8e8e8">User</div>
<div class="t" style="left:1430.1px;top:298.5px;font-size:17px;font-weight:700;color:#454545">Sys</div>
<div class="t" style="left:1467px;top:298.5px;font-size:17px;font-weight:700;color:#454545">GMT</div>
<svg width="1908" height="707" style="position:absolute;left:0;top:0">
<defs><linearGradient id="fg" x1="0" y1="0" x2="0" y2="1" gradientUnits="userSpaceOnUse" ></linearGradient><linearGradient id="ar" gradientUnits="userSpaceOnUse" x1="0" y1="342" x2="0" y2="661"><stop offset="0" stop-color="#fce2ca"/><stop offset="0.5" stop-color="#fdefe2"/><stop offset="0.72" stop-color="#fef8f1"/><stop offset="1" stop-color="#fefcfa"/></linearGradient></defs>
<polygon points="401.2,661.0 401.2,418.9 402.9,420.2 404.6,415.6 406.5,413.6 408.5,406.9 410.1,391.0 411.8,380.5 413.0,376.2 414.2,375.7 416.2,382.9 418.1,411.7 420.0,406.9 421.9,378.1 423.8,380.5 425.8,392.5 427.7,421.3 429.6,426.2 431.5,409.3 433.5,416.5 434.9,417.3 436.3,423.8 437.8,420.1 439.2,418.9 440.7,428.1 442.1,433.4 443.6,438.0 445.0,445.4 446.4,443.1 447.9,438.2 449.8,437.7 451.7,443.0 453.2,443.1 454.6,447.8 456.1,445.5 457.5,440.6 458.9,444.1 460.4,450.2 461.8,440.1 463.3,433.4 464.7,430.0 466.2,431.0 467.8,428.4 469.5,421.3 470.7,415.2 471.9,411.7 473.4,411.1 474.8,414.1 476.2,417.9 477.7,426.2 479.1,418.1 480.6,414.1 482.0,417.9 483.5,416.5 484.9,435.6 486.3,450.2 487.5,462.9 488.8,471.8 490.0,459.6 491.2,452.6 492.6,441.6 494.0,433.4 495.5,437.9 496.9,438.2 498.4,437.1 499.8,431.0 501.7,440.5 503.7,445.4 505.1,456.0 506.5,469.4 508.5,458.9 510.4,445.4 511.8,443.3 513.3,438.2 514.7,446.1 516.2,450.2 517.6,444.0 519.0,443.0 520.5,465.2 521.9,483.8 523.4,469.3 524.8,450.2 526.2,455.1 527.7,457.4 529.1,441.3 530.6,431.0 532.5,455.0 533.9,452.6 535.4,445.4 536.8,436.9 538.3,431.0 539.7,434.5 541.2,433.4 542.6,441.1 544.0,445.4 545.5,460.2 546.9,469.4 548.8,500.7 550.3,493.5 551.7,483.8 553.2,483.3 554.6,479.0 556.1,472.1 557.5,469.4 558.9,469.2 560.4,474.2 561.8,490.9 563.3,512.7 564.7,517.0 566.2,517.5 567.6,530.9 569.0,541.5 570.5,537.5 571.9,529.5 573.8,522.3 575.3,539.5 576.7,551.2 578.2,558.7 579.6,560.8 581.1,572.9 582.5,580.0 583.9,594.4 585.4,604.0 587.3,618.5 588.8,619.0 590.2,613.7 591.6,614.7 593.1,618.5 594.5,621.7 596.0,628.1 597.4,629.3 598.8,632.9 600.8,633.6 602.7,637.7 604.6,632.6 606.5,630.5 608.0,636.4 609.4,637.7 611.3,641.8 613.3,640.1 615.2,640.2 617.1,642.5 619.0,645.9 621.0,647.3 623.4,648.0 625.8,647.3 628.2,649.2 630.6,649.7 633.0,649.3 635.4,652.1 637.8,652.4 640.2,651.2 642.6,653.3 645.0,653.1 647.3,652.4 649.6,653.1 652.0,653.8 654.4,656.9 656.8,660.1 659.2,660.8 660.7,657.4 662.1,656.9 663.6,654.1 665.0,649.7 666.9,652.5 668.8,652.1 671.2,651.3 673.7,648.3 676.1,648.3 678.5,651.2 680.9,651.5 683.3,649.7 685.7,651.2 688.1,651.2 690.5,650.8 692.9,653.1 695.3,652.5 697.7,649.7 700.1,647.4 702.5,647.3 704.9,644.6 707.3,644.9 709.7,644.5 712.1,642.5 714.5,637.5 716.9,635.3 719.3,639.5 721.7,637.7 724.1,631.6 726.5,630.5 728.9,627.8 731.3,620.9 732.8,615.4 734.2,613.7 736.2,613.4 738.1,617.5 739.5,617.9 741.0,613.7 742.4,606.2 743.8,604.0 745.3,604.2 746.7,599.2 748.2,590.5 749.6,584.8 751.1,590.3 752.5,592.0 753.9,590.2 755.4,594.4 756.8,606.1 758.3,613.7 759.7,620.8 761.2,632.9 762.6,640.9 764.0,644.9 765.5,648.9 766.9,649.7 768.8,651.2 770.8,651.2 772.7,648.4 774.6,647.3 776.5,645.1 778.5,644.9 780.4,647.3 782.3,618.5 784.2,589.6 785.7,583.5 787.1,572.8 788.6,568.3 790.0,568.0 791.4,564.6 792.9,556.0 794.3,555.7 795.8,560.8 797.2,554.3 798.7,553.6 800.1,557.5 801.5,565.6 803.0,558.8 804.4,556.0 806.3,554.9 808.3,551.2 809.7,559.2 811.2,563.2 812.6,553.5 814.0,548.8 816.0,541.5 817.4,525.3 818.8,515.1 820.3,518.4 821.7,524.7 823.2,535.8 824.6,541.5 826.1,540.4 827.5,543.9 828.9,542.7 830.4,536.7 831.8,527.4 833.3,515.1 834.7,517.5 836.2,522.3 838.1,503.1 840.0,494.9 841.9,491.1 843.4,479.5 844.8,471.8 846.2,466.7 847.7,467.0 849.6,459.8 851.1,456.2 852.5,455.0 853.9,449.7 855.4,447.8 856.8,442.8 858.3,443.0 859.7,449.5 861.2,452.6 862.6,457.7 864.0,457.4 866.0,445.4 867.4,425.7 868.8,411.7 870.3,410.9 871.7,404.5 873.2,409.6 874.6,409.3 876.1,403.6 877.5,402.1 879.4,373.3 880.9,375.3 882.3,382.9 883.8,368.6 885.2,358.8 887.1,351.6 888.6,363.3 890.0,378.1 890.8,373.3 892.2,382.8 893.7,387.7 895.1,380.7 896.5,378.1 898.0,388.9 899.4,394.9 900.9,391.5 902.3,382.9 903.8,383.7 905.2,390.1 906.6,394.5 908.1,402.1 909.5,404.6 911.0,404.5 912.9,474.2 914.3,556.0 915.8,512.7 917.7,406.9 919.6,390.1 921.1,390.4 922.5,394.9 923.9,388.7 925.4,387.7 926.8,380.9 928.3,378.1 929.7,388.9 931.2,404.5 932.6,393.4 934.0,378.1 935.5,392.2 936.9,402.1 938.4,403.3 939.8,409.3 941.2,411.0 942.7,406.9 944.1,409.0 945.6,416.5 947.0,424.2 948.5,435.8 949.9,435.4 951.3,431.0 952.8,432.2 954.2,438.2 955.7,437.1 957.1,433.4 958.6,444.4 960.0,450.2 961.4,441.3 962.9,438.2 964.3,450.4 965.8,459.8 967.2,455.7 968.7,457.4 970.1,460.9 971.5,469.4 973.0,465.1 974.4,464.6 975.9,470.9 977.3,474.2 978.8,466.7 980.2,462.2 981.6,471.2 983.1,474.2 984.5,473.6 986.0,469.4 987.4,461.6 988.8,457.4 990.3,464.5 991.7,476.6 993.2,473.6 994.6,474.2 996.1,478.6 997.5,479.0 998.9,475.9 1000.4,476.6 1001.8,488.4 1003.3,495.9 1004.7,496.9 1006.2,500.7 1007.6,492.9 1009.0,491.1 1010.5,495.7 1011.9,503.1 1013.8,519.9 1015.3,512.8 1016.7,503.1 1018.2,497.8 1019.6,495.9 1021.1,498.0 1022.5,505.5 1023.9,502.6 1025.4,495.9 1026.8,497.1 1028.3,493.5 1029.7,484.5 1031.2,479.0 1032.6,472.3 1034.0,469.4 1035.5,455.7 1036.9,445.4 1038.8,440.6 1040.8,440.6 1042.2,451.5 1043.7,459.8 1045.1,470.5 1046.5,483.8 1048.5,455.0 1050.4,445.4 1052.3,474.2 1053.8,493.8 1055.2,517.5 1056.6,530.1 1058.1,536.7 1059.5,549.2 1061.0,556.0 1062.4,565.5 1063.8,570.4 1065.3,577.9 1066.7,589.6 1068.2,587.9 1069.6,592.0 1071.1,597.6 1072.5,606.4 1073.9,608.5 1075.4,613.7 1077.3,620.8 1079.2,623.3 1081.2,625.2 1083.1,630.5 1084.5,632.4 1086.0,637.7 1087.9,632.8 1089.8,633.8 1091.7,633.3 1093.7,635.3 1095.6,634.4 1097.5,637.7 1099.4,634.8 1101.3,637.7 1103.3,640.1 1105.2,647.3 1107.6,649.8 1110.0,649.7 1112.2,653.0 1114.4,653.1 1116.8,655.8 1119.2,656.0 1121.6,656.0 1124.0,657.9 1126.4,657.6 1128.8,659.3 1131.2,661.1 1133.7,659.8 1136.1,659.6 1138.5,660.8 1140.9,661.1 1143.3,659.3 1145.7,659.3 1148.1,660.8 1150.5,661.8 1152.9,659.8 1155.3,661.5 1157.7,660.8 1160.1,660.7 1162.5,659.3 1163.9,656.1 1165.4,654.5 1167.3,653.5 1169.2,651.2 1170.7,653.2 1172.1,652.1 1174.5,653.5 1176.9,653.1 1179.3,653.0 1181.7,651.2 1184.1,651.5 1186.5,653.1 1188.9,650.9 1191.3,647.3 1192.8,647.2 1194.2,644.9 1195.7,642.8 1197.1,642.5 1198.6,639.4 1200.0,637.7 1201.4,637.4 1202.9,640.1 1204.3,636.7 1205.8,635.3 1207.2,638.2 1208.7,637.7 1210.1,632.7 1211.5,630.5 1213.5,623.3 1215.4,613.7 1216.8,608.9 1218.3,608.8 1219.7,616.2 1221.2,618.5 1222.6,617.5 1224.0,613.7 1225.5,614.8 1226.9,618.5 1228.4,615.0 1229.8,606.4 1231.2,604.8 1232.7,608.8 1234.1,600.1 1235.6,596.8 1237.0,596.7 1238.5,599.2 1239.9,594.2 1241.3,592.0 1242.8,597.4 1244.2,596.8 1245.7,594.7 1247.1,587.2 1248.6,586.1 1250.0,589.6 1251.4,582.7 1252.9,580.0 1254.3,574.4 1255.8,572.8 1257.7,565.6 1259.1,566.6 1260.6,572.8 1262.0,572.8 1263.5,577.6 1264.9,566.6 1266.3,560.8 1268.3,546.3 1270.2,536.7 1272.1,515.1 1274.0,510.3 1275.5,513.1 1276.9,512.7 1278.8,522.3 1280.3,508.8 1281.7,500.7 1283.2,494.6 1284.6,493.5 1286.5,483.8 1288.0,472.6 1289.4,464.6 1290.9,458.3 1292.3,447.8 1293.8,452.7 1295.2,455.0 1296.6,460.0 1298.1,459.8 1300.0,471.8 1301.9,479.0 1303.8,445.4 1305.3,434.4 1306.7,426.2 1308.2,418.3 1309.6,414.1 1311.1,412.8 1312.5,406.9 1314.4,409.3 1316.3,402.1 1318.3,398.5 1320.2,397.3 1322.1,387.7 1323.6,390.4 1325.0,397.3 1326.4,393.7 1327.9,394.9 1329.8,396.6 1331.7,394.9 1333.2,392.1 1334.6,385.3 1336.1,381.9 1337.5,373.3 1338.9,363.1 1340.4,356.4 1341.8,359.6 1343.3,368.5 1344.7,361.9 1346.2,358.8 1347.6,365.8 1349.0,378.1 1350.1,356.4 1351.3,365.4 1352.5,368.5 1353.9,373.6 1355.4,375.7 1356.8,377.9 1358.3,382.9 1359.7,386.2 1361.2,392.5 1362.6,402.6 1364.0,406.9 1365.5,402.2 1366.9,402.1 1368.4,397.7 1369.8,387.7 1371.2,384.5 1372.7,378.1 1374.6,392.5 1376.1,400.4 1377.5,404.5 1378.9,392.5 1380.4,382.9 1381.8,382.9 1383.3,378.1 1384.7,378.6 1386.2,375.7 1387.6,380.9 1389.0,390.1 1390.5,401.5 1391.9,409.3 1393.4,397.3 1394.8,382.9 1396.2,378.4 1397.7,368.5 1399.1,369.2 1400.6,375.7 1402.0,368.4 1403.5,366.1 1404.9,371.3 1406.3,373.3 1407.8,394.2 1409.2,418.9 1410.7,401.5 1412.1,387.7 1413.6,386.6 1415.0,380.5 1416.4,384.8 1417.9,392.5 1419.3,383.8 1420.8,380.5 1422.2,391.2 1423.7,397.3 1425.6,414.1 1427.5,385.3 1428.9,395.7 1430.4,409.3 1431.8,416.1 1433.3,418.9 1434.7,412.1 1436.2,402.1 1437.6,420.4 1439.0,433.4 1440.5,422.9 1441.9,406.9 1443.8,373.3 1445.8,406.9 1447.7,433.4 1449.1,444.6 1450.6,450.2 1452.0,456.1 1453.5,467.0 1455.4,455.0 1457.3,483.8 1458.8,478.6 1460.2,479.0 1461.6,485.9 1463.1,488.7 1465.0,500.7 1466.9,519.9 1468.4,499.5 1469.8,483.8 1471.2,471.5 1472.7,455.0 1474.1,467.9 1475.6,483.8 1477.0,496.5 1478.5,505.5 1479.9,501.1 1481.3,493.5 1482.8,500.2 1484.2,503.1 1485.7,472.5 1487.1,445.4 1488.6,434.8 1490.0,421.3 1491.4,410.4 1492.9,402.1 1494.3,409.1 1495.8,411.7 1497.2,425.4 1498.7,433.4 1500.1,434.1 1501.5,431.0 1503.0,436.5 1504.4,445.4 1505.9,448.4 1507.3,455.0 1508.8,456.8 1510.2,462.2 1512.1,469.4 1514.0,443.0 1515.5,447.0 1516.9,447.8 1518.4,448.6 1519.8,455.0 1521.2,471.3 1522.7,483.8 1524.1,490.4 1525.6,500.7 1527.0,514.0 1528.5,522.3 1530.4,546.3 1532.3,524.7 1533.8,530.0 1535.2,531.9 1537.1,541.5 1539.0,570.4 1540.5,581.4 1541.9,589.6 1543.4,593.1 1544.8,599.2 1546.2,599.7 1547.7,604.0 1549.1,610.8 1550.6,613.7 1552.5,620.0 1554.4,620.9 1556.3,620.6 1558.3,623.3 1560.2,628.2 1562.1,628.1 1564.0,632.2 1566.0,630.5 1567.9,632.9 1569.8,632.9 1571.7,638.2 1573.7,637.7 1575.6,641.8 1577.5,640.1 1579.4,641.1 1581.3,644.9 1583.3,645.3 1585.2,647.3 1587.6,647.0 1590.0,649.7 1592.4,649.2 1594.8,647.3 1597.2,647.9 1599.6,649.7 1602.0,648.1 1604.4,648.3 1606.8,646.5 1609.2,647.3 1610.7,647.7 1612.1,644.9 1613.6,648.5 1615.0,649.7 1616.9,652.7 1618.8,653.1 1621.2,653.1 1623.7,654.5 1626.1,656.4 1628.5,656.0 1630.9,655.4 1633.3,656.9 1635.7,654.6 1638.1,655.0 1640.5,653.4 1642.9,653.1 1645.3,653.0 1647.7,649.7 1650.1,652.0 1652.5,651.2 1654.9,648.1 1657.3,647.3 1659.7,646.6 1662.1,648.3 1664.5,645.0 1666.9,644.9 1669.3,646.8 1671.7,647.3 1673.2,643.3 1674.6,641.5 1676.1,646.3 1677.5,649.7 1678.9,643.6 1680.4,640.1 1682.3,639.8 1684.2,637.7 1686.2,632.4 1688.1,631.9 1689.5,632.3 1691.0,629.0 1692.4,626.5 1693.8,620.9 1695.3,621.0 1696.7,616.1 1698.2,610.9 1699.6,608.8 1701.1,602.3 1702.5,599.2 1703.9,600.0 1705.4,604.0 1706.8,596.4 1708.3,592.0 1709.7,589.8 1711.2,584.8 1712.6,582.3 1714.0,575.2 1715.5,570.7 1716.9,570.4 1718.4,565.1 1719.8,565.6 1721.2,557.9 1722.7,556.0 1724.1,550.8 1725.6,548.8 1727.0,545.6 1728.5,546.3 1729.9,540.0 1731.3,536.7 1732.8,542.0 1734.2,541.5 1735.7,539.2 1737.1,531.9 1738.6,531.5 1740.0,536.7 1741.4,533.5 1742.9,527.1 1744.8,522.3 1746.7,498.3 1748.2,493.5 1749.6,486.2 1751.1,493.8 1752.5,495.9 1753.9,487.0 1755.4,474.2 1756.8,477.8 1758.3,483.8 1759.7,482.8 1761.2,479.0 1762.6,477.2 1764.0,469.4 1765.5,468.4 1766.9,471.8 1768.4,466.3 1769.8,464.6 1771.2,464.9 1772.7,459.8 1774.1,458.8 1775.6,455.0 1777.0,449.3 1778.5,440.6 1779.9,438.5 1781.3,433.4 1782.8,431.1 1784.2,423.8 1785.7,421.4 1787.1,416.5 1788.6,423.0 1790.0,426.2 1791.9,447.8 1793.4,437.0 1794.8,423.8 1796.2,422.9 1797.7,426.2 1799.1,418.5 1800.6,414.1 1802.0,408.9 1803.5,409.3 1804.9,395.6 1806.3,378.1 1808.3,406.9 1810.2,387.7 1812.1,380.5 1813.6,401.4 1815.0,416.5 1816.4,395.6 1817.9,378.1 1819.3,387.0 1820.8,390.1 1822.2,382.9 1823.7,373.3 1825.1,369.6 1826.5,368.5 1828.5,392.5 1829.9,376.7 1831.3,363.7 1833.3,378.1 1834.7,378.6 1836.2,373.3 1837.6,385.5 1839.0,392.5 1841.0,375.7 1842.9,397.3 1842.9,661.0" fill="url(#ar)"/>
<line x1="396" y1="397.5" x2="1852" y2="397.5" stroke="#6a6a6a" stroke-width="1.3"/>
<line x1="396" y1="485.5" x2="1852" y2="485.5" stroke="#6a6a6a" stroke-width="1.3"/>
<line x1="396" y1="573.5" x2="1852" y2="573.5" stroke="#6a6a6a" stroke-width="1.3"/>
<line x1="395.7" y1="341.3" x2="1846" y2="341.3" stroke="#e9b05a" stroke-width="2" stroke-dasharray="16.5 4.92"/>
<polyline points="401.2,418.9 402.9,420.2 404.6,415.6 406.5,413.6 408.5,406.9 410.1,391.0 411.8,380.5 413.0,376.2 414.2,375.7 416.2,382.9 418.1,411.7 420.0,406.9 421.9,378.1 423.8,380.5 425.8,392.5 427.7,421.3 429.6,426.2 431.5,409.3 433.5,416.5 434.9,417.3 436.3,423.8 437.8,420.1 439.2,418.9 440.7,428.1 442.1,433.4 443.6,438.0 445.0,445.4 446.4,443.1 447.9,438.2 449.8,437.7 451.7,443.0 453.2,443.1 454.6,447.8 456.1,445.5 457.5,440.6 458.9,444.1 460.4,450.2 461.8,440.1 463.3,433.4 464.7,430.0 466.2,431.0 467.8,428.4 469.5,421.3 470.7,415.2 471.9,411.7 473.4,411.1 474.8,414.1 476.2,417.9 477.7,426.2 479.1,418.1 480.6,414.1 482.0,417.9 483.5,416.5 484.9,435.6 486.3,450.2 487.5,462.9 488.8,471.8 490.0,459.6 491.2,452.6 492.6,441.6 494.0,433.4 495.5,437.9 496.9,438.2 498.4,437.1 499.8,431.0 501.7,440.5 503.7,445.4 505.1,456.0 506.5,469.4 508.5,458.9 510.4,445.4 511.8,443.3 513.3,438.2 514.7,446.1 516.2,450.2 517.6,444.0 519.0,443.0 520.5,465.2 521.9,483.8 523.4,469.3 524.8,450.2 526.2,455.1 527.7,457.4 529.1,441.3 530.6,431.0 532.5,455.0 533.9,452.6 535.4,445.4 536.8,436.9 538.3,431.0 539.7,434.5 541.2,433.4 542.6,441.1 544.0,445.4 545.5,460.2 546.9,469.4 548.8,500.7 550.3,493.5 551.7,483.8 553.2,483.3 554.6,479.0 556.1,472.1 557.5,469.4 558.9,469.2 560.4,474.2 561.8,490.9 563.3,512.7 564.7,517.0 566.2,517.5 567.6,530.9 569.0,541.5 570.5,537.5 571.9,529.5 573.8,522.3 575.3,539.5 576.7,551.2 578.2,558.7 579.6,560.8 581.1,572.9 582.5,580.0 583.9,594.4 585.4,604.0 587.3,618.5 588.8,619.0 590.2,613.7 591.6,614.7 593.1,618.5 594.5,621.7 596.0,628.1 597.4,629.3 598.8,632.9 600.8,633.6 602.7,637.7 604.6,632.6 606.5,630.5 608.0,636.4 609.4,637.7 611.3,641.8 613.3,640.1 615.2,640.2 617.1,642.5 619.0,645.9 621.0,647.3 623.4,648.0 625.8,647.3 628.2,649.2 630.6,649.7 633.0,649.3 635.4,652.1 637.8,652.4 640.2,651.2 642.6,653.3 645.0,653.1 647.3,652.4 649.6,653.1 652.0,653.8 654.4,656.9 656.8,660.1 659.2,660.8 660.7,657.4 662.1,656.9 663.6,654.1 665.0,649.7 666.9,652.5 668.8,652.1 671.2,651.3 673.7,648.3 676.1,648.3 678.5,651.2 680.9,651.5 683.3,649.7 685.7,651.2 688.1,651.2 690.5,650.8 692.9,653.1 695.3,652.5 697.7,649.7 700.1,647.4 702.5,647.3 704.9,644.6 707.3,644.9 709.7,644.5 712.1,642.5 714.5,637.5 716.9,635.3 719.3,639.5 721.7,637.7 724.1,631.6 726.5,630.5 728.9,627.8 731.3,620.9 732.8,615.4 734.2,613.7 736.2,613.4 738.1,617.5 739.5,617.9 741.0,613.7 742.4,606.2 743.8,604.0 745.3,604.2 746.7,599.2 748.2,590.5 749.6,584.8 751.1,590.3 752.5,592.0 753.9,590.2 755.4,594.4 756.8,606.1 758.3,613.7 759.7,620.8 761.2,632.9 762.6,640.9 764.0,644.9 765.5,648.9 766.9,649.7 768.8,651.2 770.8,651.2 772.7,648.4 774.6,647.3 776.5,645.1 778.5,644.9 780.4,647.3 782.3,618.5 784.2,589.6 785.7,583.5 787.1,572.8 788.6,568.3 790.0,568.0 791.4,564.6 792.9,556.0 794.3,555.7 795.8,560.8 797.2,554.3 798.7,553.6 800.1,557.5 801.5,565.6 803.0,558.8 804.4,556.0 806.3,554.9 808.3,551.2 809.7,559.2 811.2,563.2 812.6,553.5 814.0,548.8 816.0,541.5 817.4,525.3 818.8,515.1 820.3,518.4 821.7,524.7 823.2,535.8 824.6,541.5 826.1,540.4 827.5,543.9 828.9,542.7 830.4,536.7 831.8,527.4 833.3,515.1 834.7,517.5 836.2,522.3 838.1,503.1 840.0,494.9 841.9,491.1 843.4,479.5 844.8,471.8 846.2,466.7 847.7,467.0 849.6,459.8 851.1,456.2 852.5,455.0 853.9,449.7 855.4,447.8 856.8,442.8 858.3,443.0 859.7,449.5 861.2,452.6 862.6,457.7 864.0,457.4 866.0,445.4 867.4,425.7 868.8,411.7 870.3,410.9 871.7,404.5 873.2,409.6 874.6,409.3 876.1,403.6 877.5,402.1 879.4,373.3 880.9,375.3 882.3,382.9 883.8,368.6 885.2,358.8 887.1,351.6 888.6,363.3 890.0,378.1 890.8,373.3 892.2,382.8 893.7,387.7 895.1,380.7 896.5,378.1 898.0,388.9 899.4,394.9 900.9,391.5 902.3,382.9 903.8,383.7 905.2,390.1 906.6,394.5 908.1,402.1 909.5,404.6 911.0,404.5 912.9,474.2 914.3,556.0 915.8,512.7 917.7,406.9 919.6,390.1 921.1,390.4 922.5,394.9 923.9,388.7 925.4,387.7 926.8,380.9 928.3,378.1 929.7,388.9 931.2,404.5 932.6,393.4 934.0,378.1 935.5,392.2 936.9,402.1 938.4,403.3 939.8,409.3 941.2,411.0 942.7,406.9 944.1,409.0 945.6,416.5 947.0,424.2 948.5,435.8 949.9,435.4 951.3,431.0 952.8,432.2 954.2,438.2 955.7,437.1 957.1,433.4 958.6,444.4 960.0,450.2 961.4,441.3 962.9,438.2 964.3,450.4 965.8,459.8 967.2,455.7 968.7,457.4 970.1,460.9 971.5,469.4 973.0,465.1 974.4,464.6 975.9,470.9 977.3,474.2 978.8,466.7 980.2,462.2 981.6,471.2 983.1,474.2 984.5,473.6 986.0,469.4 987.4,461.6 988.8,457.4 990.3,464.5 991.7,476.6 993.2,473.6 994.6,474.2 996.1,478.6 997.5,479.0 998.9,475.9 1000.4,476.6 1001.8,488.4 1003.3,495.9 1004.7,496.9 1006.2,500.7 1007.6,492.9 1009.0,491.1 1010.5,495.7 1011.9,503.1 1013.8,519.9 1015.3,512.8 1016.7,503.1 1018.2,497.8 1019.6,495.9 1021.1,498.0 1022.5,505.5 1023.9,502.6 1025.4,495.9 1026.8,497.1 1028.3,493.5 1029.7,484.5 1031.2,479.0 1032.6,472.3 1034.0,469.4 1035.5,455.7 1036.9,445.4 1038.8,440.6 1040.8,440.6 1042.2,451.5 1043.7,459.8 1045.1,470.5 1046.5,483.8 1048.5,455.0 1050.4,445.4 1052.3,474.2 1053.8,493.8 1055.2,517.5 1056.6,530.1 1058.1,536.7 1059.5,549.2 1061.0,556.0 1062.4,565.5 1063.8,570.4 1065.3,577.9 1066.7,589.6 1068.2,587.9 1069.6,592.0 1071.1,597.6 1072.5,606.4 1073.9,608.5 1075.4,613.7 1077.3,620.8 1079.2,623.3 1081.2,625.2 1083.1,630.5 1084.5,632.4 1086.0,637.7 1087.9,632.8 1089.8,633.8 1091.7,633.3 1093.7,635.3 1095.6,634.4 1097.5,637.7 1099.4,634.8 1101.3,637.7 1103.3,640.1 1105.2,647.3 1107.6,649.8 1110.0,649.7 1112.2,653.0 1114.4,653.1 1116.8,655.8 1119.2,656.0 1121.6,656.0 1124.0,657.9 1126.4,657.6 1128.8,659.3 1131.2,661.1 1133.7,659.8 1136.1,659.6 1138.5,660.8 1140.9,661.1 1143.3,659.3 1145.7,659.3 1148.1,660.8 1150.5,661.8 1152.9,659.8 1155.3,661.5 1157.7,660.8 1160.1,660.7 1162.5,659.3 1163.9,656.1 1165.4,654.5 1167.3,653.5 1169.2,651.2 1170.7,653.2 1172.1,652.1 1174.5,653.5 1176.9,653.1 1179.3,653.0 1181.7,651.2 1184.1,651.5 1186.5,653.1 1188.9,650.9 1191.3,647.3 1192.8,647.2 1194.2,644.9 1195.7,642.8 1197.1,642.5 1198.6,639.4 1200.0,637.7 1201.4,637.4 1202.9,640.1 1204.3,636.7 1205.8,635.3 1207.2,638.2 1208.7,637.7 1210.1,632.7 1211.5,630.5 1213.5,623.3 1215.4,613.7 1216.8,608.9 1218.3,608.8 1219.7,616.2 1221.2,618.5 1222.6,617.5 1224.0,613.7 1225.5,614.8 1226.9,618.5 1228.4,615.0 1229.8,606.4 1231.2,604.8 1232.7,608.8 1234.1,600.1 1235.6,596.8 1237.0,596.7 1238.5,599.2 1239.9,594.2 1241.3,592.0 1242.8,597.4 1244.2,596.8 1245.7,594.7 1247.1,587.2 1248.6,586.1 1250.0,589.6 1251.4,582.7 1252.9,580.0 1254.3,574.4 1255.8,572.8 1257.7,565.6 1259.1,566.6 1260.6,572.8 1262.0,572.8 1263.5,577.6 1264.9,566.6 1266.3,560.8 1268.3,546.3 1270.2,536.7 1272.1,515.1 1274.0,510.3 1275.5,513.1 1276.9,512.7 1278.8,522.3 1280.3,508.8 1281.7,500.7 1283.2,494.6 1284.6,493.5 1286.5,483.8 1288.0,472.6 1289.4,464.6 1290.9,458.3 1292.3,447.8 1293.8,452.7 1295.2,455.0 1296.6,460.0 1298.1,459.8 1300.0,471.8 1301.9,479.0 1303.8,445.4 1305.3,434.4 1306.7,426.2 1308.2,418.3 1309.6,414.1 1311.1,412.8 1312.5,406.9 1314.4,409.3 1316.3,402.1 1318.3,398.5 1320.2,397.3 1322.1,387.7 1323.6,390.4 1325.0,397.3 1326.4,393.7 1327.9,394.9 1329.8,396.6 1331.7,394.9 1333.2,392.1 1334.6,385.3 1336.1,381.9 1337.5,373.3 1338.9,363.1 1340.4,356.4 1341.8,359.6 1343.3,368.5 1344.7,361.9 1346.2,358.8 1347.6,365.8 1349.0,378.1 1350.1,356.4 1351.3,365.4 1352.5,368.5 1353.9,373.6 1355.4,375.7 1356.8,377.9 1358.3,382.9 1359.7,386.2 1361.2,392.5 1362.6,402.6 1364.0,406.9 1365.5,402.2 1366.9,402.1 1368.4,397.7 1369.8,387.7 1371.2,384.5 1372.7,378.1 1374.6,392.5 1376.1,400.4 1377.5,404.5 1378.9,392.5 1380.4,382.9 1381.8,382.9 1383.3,378.1 1384.7,378.6 1386.2,375.7 1387.6,380.9 1389.0,390.1 1390.5,401.5 1391.9,409.3 1393.4,397.3 1394.8,382.9 1396.2,378.4 1397.7,368.5 1399.1,369.2 1400.6,375.7 1402.0,368.4 1403.5,366.1 1404.9,371.3 1406.3,373.3 1407.8,394.2 1409.2,418.9 1410.7,401.5 1412.1,387.7 1413.6,386.6 1415.0,380.5 1416.4,384.8 1417.9,392.5 1419.3,383.8 1420.8,380.5 1422.2,391.2 1423.7,397.3 1425.6,414.1 1427.5,385.3 1428.9,395.7 1430.4,409.3 1431.8,416.1 1433.3,418.9 1434.7,412.1 1436.2,402.1 1437.6,420.4 1439.0,433.4 1440.5,422.9 1441.9,406.9 1443.8,373.3 1445.8,406.9 1447.7,433.4 1449.1,444.6 1450.6,450.2 1452.0,456.1 1453.5,467.0 1455.4,455.0 1457.3,483.8 1458.8,478.6 1460.2,479.0 1461.6,485.9 1463.1,488.7 1465.0,500.7 1466.9,519.9 1468.4,499.5 1469.8,483.8 1471.2,471.5 1472.7,455.0 1474.1,467.9 1475.6,483.8 1477.0,496.5 1478.5,505.5 1479.9,501.1 1481.3,493.5 1482.8,500.2 1484.2,503.1 1485.7,472.5 1487.1,445.4 1488.6,434.8 1490.0,421.3 1491.4,410.4 1492.9,402.1 1494.3,409.1 1495.8,411.7 1497.2,425.4 1498.7,433.4 1500.1,434.1 1501.5,431.0 1503.0,436.5 1504.4,445.4 1505.9,448.4 1507.3,455.0 1508.8,456.8 1510.2,462.2 1512.1,469.4 1514.0,443.0 1515.5,447.0 1516.9,447.8 1518.4,448.6 1519.8,455.0 1521.2,471.3 1522.7,483.8 1524.1,490.4 1525.6,500.7 1527.0,514.0 1528.5,522.3 1530.4,546.3 1532.3,524.7 1533.8,530.0 1535.2,531.9 1537.1,541.5 1539.0,570.4 1540.5,581.4 1541.9,589.6 1543.4,593.1 1544.8,599.2 1546.2,599.7 1547.7,604.0 1549.1,610.8 1550.6,613.7 1552.5,620.0 1554.4,620.9 1556.3,620.6 1558.3,623.3 1560.2,628.2 1562.1,628.1 1564.0,632.2 1566.0,630.5 1567.9,632.9 1569.8,632.9 1571.7,638.2 1573.7,637.7 1575.6,641.8 1577.5,640.1 1579.4,641.1 1581.3,644.9 1583.3,645.3 1585.2,647.3 1587.6,647.0 1590.0,649.7 1592.4,649.2 1594.8,647.3 1597.2,647.9 1599.6,649.7 1602.0,648.1 1604.4,648.3 1606.8,646.5 1609.2,647.3 1610.7,647.7 1612.1,644.9 1613.6,648.5 1615.0,649.7 1616.9,652.7 1618.8,653.1 1621.2,653.1 1623.7,654.5 1626.1,656.4 1628.5,656.0 1630.9,655.4 1633.3,656.9 1635.7,654.6 1638.1,655.0 1640.5,653.4 1642.9,653.1 1645.3,653.0 1647.7,649.7 1650.1,652.0 1652.5,651.2 1654.9,648.1 1657.3,647.3 1659.7,646.6 1662.1,648.3 1664.5,645.0 1666.9,644.9 1669.3,646.8 1671.7,647.3 1673.2,643.3 1674.6,641.5 1676.1,646.3 1677.5,649.7 1678.9,643.6 1680.4,640.1 1682.3,639.8 1684.2,637.7 1686.2,632.4 1688.1,631.9 1689.5,632.3 1691.0,629.0 1692.4,626.5 1693.8,620.9 1695.3,621.0 1696.7,616.1 1698.2,610.9 1699.6,608.8 1701.1,602.3 1702.5,599.2 1703.9,600.0 1705.4,604.0 1706.8,596.4 1708.3,592.0 1709.7,589.8 1711.2,584.8 1712.6,582.3 1714.0,575.2 1715.5,570.7 1716.9,570.4 1718.4,565.1 1719.8,565.6 1721.2,557.9 1722.7,556.0 1724.1,550.8 1725.6,548.8 1727.0,545.6 1728.5,546.3 1729.9,540.0 1731.3,536.7 1732.8,542.0 1734.2,541.5 1735.7,539.2 1737.1,531.9 1738.6,531.5 1740.0,536.7 1741.4,533.5 1742.9,527.1 1744.8,522.3 1746.7,498.3 1748.2,493.5 1749.6,486.2 1751.1,493.8 1752.5,495.9 1753.9,487.0 1755.4,474.2 1756.8,477.8 1758.3,483.8 1759.7,482.8 1761.2,479.0 1762.6,477.2 1764.0,469.4 1765.5,468.4 1766.9,471.8 1768.4,466.3 1769.8,464.6 1771.2,464.9 1772.7,459.8 1774.1,458.8 1775.6,455.0 1777.0,449.3 1778.5,440.6 1779.9,438.5 1781.3,433.4 1782.8,431.1 1784.2,423.8 1785.7,421.4 1787.1,416.5 1788.6,423.0 1790.0,426.2 1791.9,447.8 1793.4,437.0 1794.8,423.8 1796.2,422.9 1797.7,426.2 1799.1,418.5 1800.6,414.1 1802.0,408.9 1803.5,409.3 1804.9,395.6 1806.3,378.1 1808.3,406.9 1810.2,387.7 1812.1,380.5 1813.6,401.4 1815.0,416.5 1816.4,395.6 1817.9,378.1 1819.3,387.0 1820.8,390.1 1822.2,382.9 1823.7,373.3 1825.1,369.6 1826.5,368.5 1828.5,392.5 1829.9,376.7 1831.3,363.7 1833.3,378.1 1834.7,378.6 1836.2,373.3 1837.6,385.5 1839.0,392.5 1841.0,375.7 1842.9,397.3" fill="none" stroke="#f39d38" stroke-width="1.5" stroke-linejoin="round"/>
<line x1="401.5" y1="327" x2="401.5" y2="663" stroke="#707070" stroke-width="2.2"/>
<line x1="1845.5" y1="327" x2="1845.5" y2="663" stroke="#707070" stroke-width="2.2"/>
<rect x="391" y="662" width="1464" height="5" fill="#7a7a7a"/>
<line x1="422.5" y1="646" x2="422.5" y2="671" stroke="#50508a" stroke-width="1.8"/>
<line x1="542.5" y1="646" x2="542.5" y2="671" stroke="#50508a" stroke-width="1.8"/>
<line x1="662.5" y1="646" x2="662.5" y2="671" stroke="#50508a" stroke-width="1.8"/>
<line x1="782.5" y1="646" x2="782.5" y2="671" stroke="#50508a" stroke-width="1.8"/>
<line x1="902.5" y1="646" x2="902.5" y2="671" stroke="#50508a" stroke-width="1.8"/>
<line x1="1022.5" y1="646" x2="1022.5" y2="671" stroke="#50508a" stroke-width="1.8"/>
<line x1="1142.5" y1="646" x2="1142.5" y2="671" stroke="#50508a" stroke-width="1.8"/>
<line x1="1262.5" y1="646" x2="1262.5" y2="671" stroke="#50508a" stroke-width="1.8"/>
<line x1="1382.5" y1="646" x2="1382.5" y2="671" stroke="#50508a" stroke-width="1.8"/>
<line x1="1502.5" y1="646" x2="1502.5" y2="671" stroke="#50508a" stroke-width="1.8"/>
<line x1="1622.5" y1="646" x2="1622.5" y2="671" stroke="#50508a" stroke-width="1.8"/>
<line x1="1742.5" y1="646" x2="1742.5" y2="671" stroke="#50508a" stroke-width="1.8"/>
<text x="422" y="688" text-anchor="middle" font-family='"Liberation Sans"' font-size="17" fill="#333">Oct 03 18:00</text>
<text x="542" y="688" text-anchor="middle" font-family='"Liberation Sans"' font-size="17" fill="#333">Oct 04 00:00</text>
<text x="662" y="688" text-anchor="middle" font-family='"Liberation Sans"' font-size="17" fill="#333">Oct 04 06:00</text>
<text x="782" y="688" text-anchor="middle" font-family='"Liberation Sans"' font-size="17" fill="#333">Oct 04 12:00</text>
<text x="902" y="688" text-anchor="middle" font-family='"Liberation Sans"' font-size="17" fill="#333">Oct 04 18:00</text>
<text x="1022" y="688" text-anchor="middle" font-family='"Liberation Sans"' font-size="17" fill="#333">Oct 05 00:00</text>
<text x="1142" y="688" text-anchor="middle" font-family='"Liberation Sans"' font-size="17" fill="#333">Oct 05 06:00</text>
<text x="1262" y="688" text-anchor="middle" font-family='"Liberation Sans"' font-size="17" fill="#333">Oct 05 12:00</text>
<text x="1382" y="688" text-anchor="middle" font-family='"Liberation Sans"' font-size="17" fill="#333">Oct 05 18:00</text>
<text x="1502" y="688" text-anchor="middle" font-family='"Liberation Sans"' font-size="17" fill="#333">Oct 06 00:00</text>
<text x="1622" y="688" text-anchor="middle" font-family='"Liberation Sans"' font-size="17" fill="#333">Oct 06 06:00</text>
<text x="1742" y="688" text-anchor="middle" font-family='"Liberation Sans"' font-size="17" fill="#333">Oct 06 12:00</text>
<text x="1854" y="347" font-family='"Liberation Sans"' font-size="17" fill="#f0a030">290</text>
<text x="1854" y="403" font-family='"Liberation Sans"' font-size="17" fill="#222">240</text>
<text x="1854" y="491" font-family='"Liberation Sans"' font-size="17" fill="#222">160</text>
<text x="1854" y="579" font-family='"Liberation Sans"' font-size="17" fill="#222">80</text>
<text x="1854" y="658" font-family='"Liberation Sans"' font-size="17" fill="#222">0</text>
</svg>
<svg class="a" style="left:842px;top:307px" width="30" height="36" viewBox="0 0 30 36"><path d="M8 4 Q8 1.5 10.5 1.5 Q13 1.5 13 4 V13 Q13 11 15.5 11 Q18 11 18 13.5 Q18 12 20.5 12 Q23 12 23 14.5 Q23 13.5 25 13.5 Q27.5 13.5 27.5 16 V24 Q27.5 30 23 34 H12 Q9 31 6 26 L2.5 20 Q1.5 18 3 17 Q4.5 16 6 17.5 L8 20 Z" fill="#fff" stroke="#222" stroke-width="1.6"/><path d="M13 13 V20 M18 13.5 V20 M23 14.5 V20" stroke="#222" stroke-width="1.2"/></svg>
<svg class="a" style="left:1884px;top:683px" width="24" height="24" viewBox="0 0 24 24"><path d="M24 0 L24 22 H2 Z" fill="#c8c8c8" stroke="#555" stroke-width="1.2"/><path d="M10 22 L24 8 M16 22 L24 14" stroke="#777" stroke-width="1"/></svg>
</body></html>
